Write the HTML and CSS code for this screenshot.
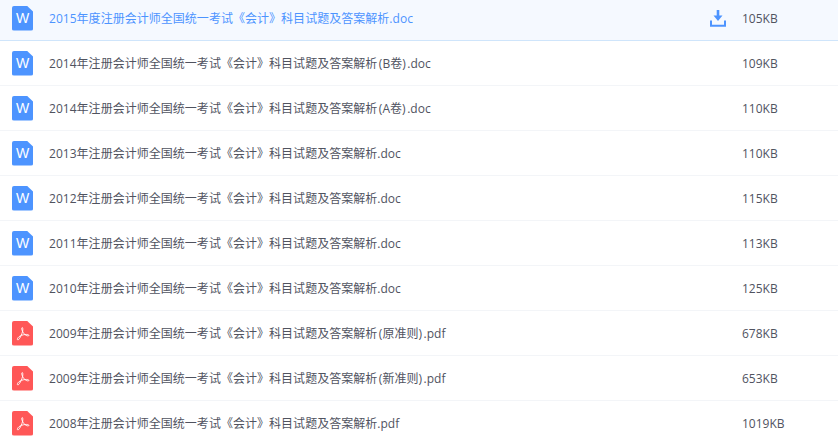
FILE: index.html
```html
<!DOCTYPE html>
<html lang="zh-CN">
<head>
    <meta charset="UTF-8">
    <title>注册会计师考试试题下载</title>
    <link rel="stylesheet" href="styles.css">
</head>
<body>
    <svg class="defs" width="0" height="0">
        <symbol id="pdf-mark" viewBox="0 0 21 25">
            <path d="M10.300 6.600c-.9 0-.7 1.600.1 3.400.7 1.600 1.900 3.300 3.400 4.200 1.300.8 3 1 3.100.2.100-.8-2-1.100-3.800-.9-2.300.3-4.900 1.100-6.300 2.400-1.200 1.100-1.900 2.500-1.200 2.900.8.400 1.800-1 2.700-2.600 1.100-2 2.300-5 2.500-7.200.1-1.100 0-2.400-.5-2.400z" fill="none" stroke="#fff" stroke-opacity=".9" stroke-width="1"/>
        </symbol>
    </svg>
    <ul class="file-list">
        <li class="file-row active">
            <span class="file-icon word">W</span>
            <span class="file-name">2015年度注册会计师全国统一考试《会计》科目试题及答案解析.doc</span>
            <svg class="download" width="16" height="17" viewBox="0 0 16 17">
                <path d="M6.700 0h2.600v5.500h3.200L8 11 3.500 5.500h3.200z" fill="#4d94ff"/>
                <path d="M1 10.500V15.800h14V10.500" fill="none" stroke="#4d94ff" stroke-width="2"/>
            </svg>
            <span class="file-size">105KB</span>
        </li>
        <li class="file-row">
            <span class="file-icon word">W</span>
            <span class="file-name">2014年注册会计师全国统一考试《会计》科目试题及答案解析<span class="note">(B卷)</span>.doc</span>
            <span class="file-size">109KB</span>
        </li>
        <li class="file-row">
            <span class="file-icon word">W</span>
            <span class="file-name">2014年注册会计师全国统一考试《会计》科目试题及答案解析<span class="note">(A卷)</span>.doc</span>
            <span class="file-size">110KB</span>
        </li>
        <li class="file-row">
            <span class="file-icon word">W</span>
            <span class="file-name">2013年注册会计师全国统一考试《会计》科目试题及答案解析.doc</span>
            <span class="file-size">110KB</span>
        </li>
        <li class="file-row">
            <span class="file-icon word">W</span>
            <span class="file-name">2012年注册会计师全国统一考试《会计》科目试题及答案解析.doc</span>
            <span class="file-size">115KB</span>
        </li>
        <li class="file-row">
            <span class="file-icon word">W</span>
            <span class="file-name">2011年注册会计师全国统一考试《会计》科目试题及答案解析.doc</span>
            <span class="file-size">113KB</span>
        </li>
        <li class="file-row">
            <span class="file-icon word">W</span>
            <span class="file-name">2010年注册会计师全国统一考试《会计》科目试题及答案解析.doc</span>
            <span class="file-size">125KB</span>
        </li>
        <li class="file-row">
            <span class="file-icon pdf"><svg width="21" height="25"><use href="#pdf-mark"/></svg></span>
            <span class="file-name">2009年注册会计师全国统一考试《会计》科目试题及答案解析<span class="note">(原准则)</span>.pdf</span>
            <span class="file-size">678KB</span>
        </li>
        <li class="file-row">
            <span class="file-icon pdf"><svg width="21" height="25"><use href="#pdf-mark"/></svg></span>
            <span class="file-name">2009年注册会计师全国统一考试《会计》科目试题及答案解析<span class="note">(新准则)</span>.pdf</span>
            <span class="file-size">653KB</span>
        </li>
        <li class="file-row">
            <span class="file-icon pdf"><svg width="21" height="25"><use href="#pdf-mark"/></svg></span>
            <span class="file-name">2008年注册会计师全国统一考试《会计》科目试题及答案解析.pdf</span>
            <span class="file-size">1019KB</span>
        </li>
    </ul>
</body>
</html>
```

FILE: styles.css
```css
html, body {
    height: 100%;
    overflow: hidden;
}
body {
    margin: 0;
    background: #fff;
    font-family: "Open Sans", "Noto Sans CJK SC", sans-serif;
    font-size: 12px;
    color: #50535f;
}
.defs {
    display: block;
}
.file-list {
    list-style: none;
    margin: -4px 0 0;
    padding: 0;
}
.file-row {
    display: flex;
    align-items: center;
    box-sizing: border-box;
    height: 45px;
    padding-left: 12px;
    border-bottom: 1px solid #f3f5f8;
}
.file-row.active {
    background: #f5f9ff;
    border-bottom-color: #cfe5fb;
}
.file-row.active .file-name {
    color: #4d94ff;
}
.file-icon {
    flex: none;
    display: flex;
    align-items: center;
    justify-content: center;
    width: 21px;
    height: 25px;
    margin-right: 16px;
    border-radius: 2px;
    clip-path: polygon(0 0, 70% 0, 100% 24%, 100% 100%, 0 100%);
    color: #fff;
    font-family: "Liberation Sans", sans-serif;
    font-size: 14px;
}
.file-icon.word {
    background: #4d94ff;
}
.file-icon.pdf {
    background: #ff5757;
}
.file-name {
    flex: 1;
    white-space: nowrap;
    letter-spacing: .03px;
}
.note {
    margin: 0 1.500px;
}
.download {
    flex: none;
    margin-right: 16px;
}
.file-size {
    flex: none;
    width: 96px;
}
```
